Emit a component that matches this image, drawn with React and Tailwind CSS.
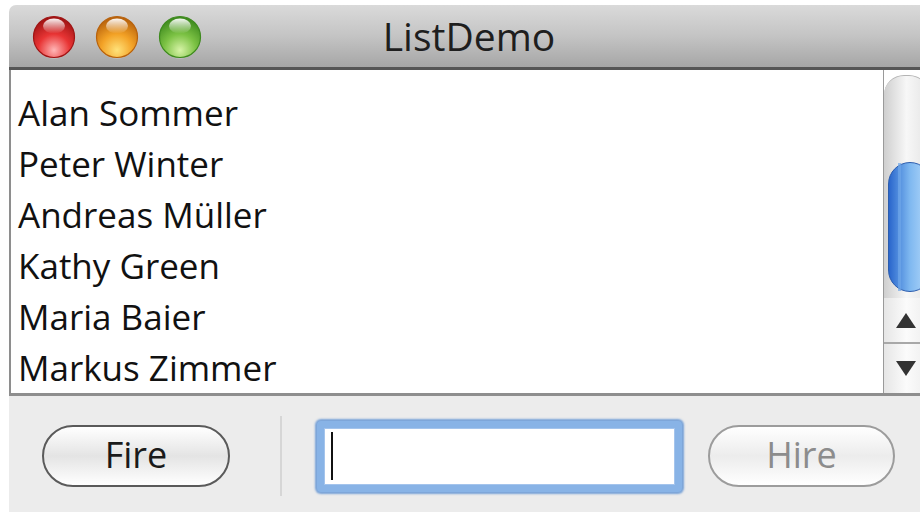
import React from 'react';

const names = ['Alan Sommer', 'Peter Winter', 'Andreas Müller', 'Kathy Green', 'Maria Baier', 'Markus Zimmer'];

// Aqua-style window control
const Light = ({ id, edge, mid, low }) => (
  <svg width="44" height="44" viewBox="0 0 44 44">
    <defs>
      <radialGradient id={`${id}-fill`} cx="50%" cy="82%" r="78%">
        <stop offset="0" stopColor={low} />
        <stop offset="0.5" stopColor={mid} />
        <stop offset="1" stopColor={edge} />
      </radialGradient>
      <linearGradient id={`${id}-shine`} x1="0" y1="0" x2="0" y2="1">
        <stop offset="0" stopColor="#fff" stopOpacity="0.95" />
        <stop offset="1" stopColor="#fff" stopOpacity="0" />
      </linearGradient>
    </defs>
    <circle cx="22" cy="23" r="20.5" fill="#ffffff" opacity="0.35" />
    <circle cx="22" cy="22" r="20.5" fill={`url(#${id}-fill)`} stroke={edge} strokeWidth="1.2" />
    <ellipse cx="22" cy="11" rx="11" ry="7.5" fill={`url(#${id}-shine)`} />
  </svg>
);

const Arrow = ({ up }) => (
  <svg width="20" height="15" viewBox="0 0 20 15">
    <polygon points={up ? '10,0 20,15 0,15' : '0,0 20,0 10,15'} fill="#333" />
  </svg>
);

export default function App() {
  return (
    <div className="w-[920px] h-[512px] bg-white overflow-hidden pt-[5px] pl-[9px] font-['Open_Sans','DejaVu_Sans',sans-serif]">
      {/* window runs past the right edge of the page */}
      <div className="flex flex-col h-full w-[920px] overflow-hidden rounded-tl-[7px]">
        {/* title bar */}
        <div className="h-[65px] shrink-0 grid grid-cols-[1fr_auto_1fr] items-center border-b-[3px] border-[#565656] bg-gradient-to-b from-[#dadada] via-[#c4c4c4] to-[#a6a6a6]">
          <div className="flex items-center gap-[19px] pl-[23px] pt-[1px]">
            <Light id="close" edge="#a01414" mid="#e83434" low="#ffb6b6" />
            <Light id="min" edge="#b8620c" mid="#f3a226" low="#ffe27a" />
            <Light id="zoom" edge="#3e8a1e" mid="#7cc244" low="#d6f3a6" />
          </div>
          <div className="text-[39px] leading-none text-[#1e1e1e] pb-[2px]">ListDemo</div>
          <div />
        </div>

        {/* list + scrollbar */}
        <div className="h-[326px] shrink-0 flex border-l-2 border-b-[3px] border-[#8e8e8e] bg-white">
          <div className="flex-1 pt-[17px] pl-[7px] text-[35px] leading-[51px] text-[#111]">
            {names.map((n) => (
              <div key={n}>{n}</div>
            ))}
          </div>
          <div className="w-[46px] shrink-0 flex flex-col border-l border-[#9a9a9a]">
            <div className="h-[5px] bg-white" />
            <div className="h-[223px] pt-[86px] pl-[4px] rounded-t-[20px] border-t border-[#b4b4b4] bg-gradient-to-r from-[#cfcfcf] via-[#f7f7f7] to-[#e4e4e4]">
              <div className="h-[130px] w-[44px] rounded-full border border-[#2a5cae] bg-gradient-to-r from-[#2a66cc] via-[#7fb8f0] to-[#b9dcfb] flex">
                <div className="ml-[9px] w-[3px] h-full bg-[#6fa6e8] opacity-70" />
              </div>
            </div>
            <div className="h-[46px] flex items-center pl-[12px] border-b-2 border-[#a8a8a8] bg-gradient-to-r from-[#e6e6e6] via-[#fbfbfb] to-[#ededed]">
              <Arrow up />
            </div>
            <div className="flex-1 flex items-center pl-[12px] bg-gradient-to-r from-[#e6e6e6] via-[#fbfbfb] to-[#ededed]">
              <Arrow />
            </div>
          </div>
        </div>

        {/* control strip */}
        <div className="flex-1 flex items-center pt-[4px] pl-[33px] bg-[#ececec]">
          <button className="w-[188px] h-[62px] rounded-full border-2 border-[#5a5a5a] bg-gradient-to-b from-white via-[#e4e4e4] to-white text-[36px] font-medium leading-none text-[#1a1a1a] pb-[3px]">
            Fire
          </button>
          <div className="ml-[50px] w-[2px] h-[80px] bg-[#d6d6d6]" />
          <div className="ml-[35px] w-[365px] h-[71px] rounded-[4px] border-[7px] border-[#88b3e6] bg-white shadow-[0_0_2px_2px_rgba(82,137,208,0.75),inset_0_0_0_1px_#a4c4ec] flex items-center pl-[7px]">
            <div className="w-[2px] h-[48px] bg-[#111]" />
          </div>
          <button className="ml-[26px] w-[187px] h-[62px] rounded-full border-2 border-[#9c9c9c] bg-gradient-to-b from-white via-[#ececec] to-white text-[36px] font-medium leading-none text-[#8c8c8c] pb-[3px]">
            Hire
          </button>
        </div>
      </div>
    </div>
  );
}
